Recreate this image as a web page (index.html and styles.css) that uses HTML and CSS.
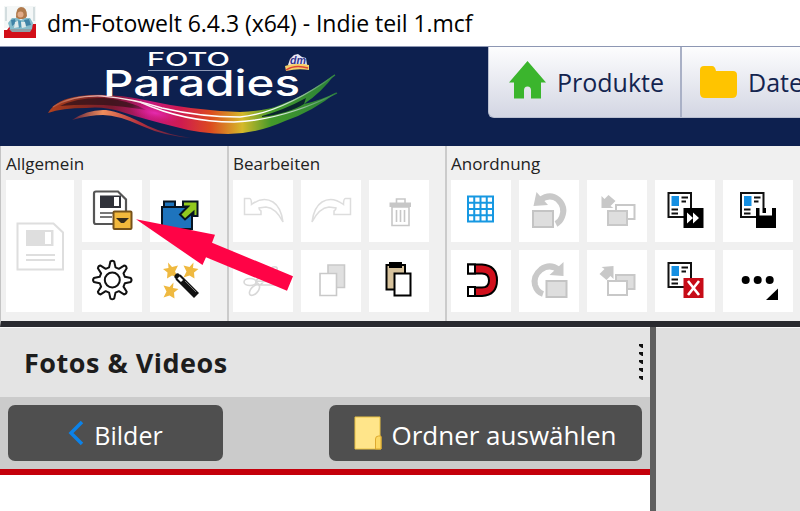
FILE: index.html
```html
<!DOCTYPE html>
<html lang="de">
<head>
    <meta charset="UTF-8">
    <meta name="viewport" content="width=device-width, initial-scale=1.0">
    <title>dm-Fotowelt</title>
    <link rel="stylesheet" href="styles.css">
</head>
<body>
    <div class="titlebar">
        <svg class="app-icon" width="34" height="34" viewBox="0 0 34 34">
            <rect x="1" y="1" width="32" height="22" fill="#f4f7f7"/>
            <path d="M3 2v14M31 2v14" stroke="#d3dddf" stroke-width="2"/>
            <path d="M13 12q0-10 5-10 6 0 6 9l-2 3h-8z" fill="#b07a4c"/>
            <circle cx="17.500" cy="9.500" r="3" fill="#e2ab88"/>
            <path d="M1 25h3l3-4h21l2-2h3v14H1z" fill="#d20f18"/>
            <path d="M5 18l4-5h5l4 2 4-2h5l3 5-1 6H7z" fill="#86bccb"/>
            <path d="M8 15l4-1 1 4-4 3zM21 15l5-1 2 6-5 1z" fill="#3f83a6"/>
            <path d="M12 17l3-1 1 6-5 1zM18 17l4 0 1 5-4 1z" fill="#dfeaeb"/>
            <path d="M15 15l3 1v6l-2 1z" fill="#4c94b4"/>
            <path d="M6 24h23l-2 3H9z" fill="#8e9fa5"/>
        </svg>
        <span class="window-title">dm-Fotowelt 6.4.3 (x64) - Indie teil 1.mcf</span>
    </div>

    <div class="header">
        <svg class="logo" width="360" height="100" viewBox="0 0 360 100">
            <defs>
                <linearGradient id="wave" x1="48" x2="338" y1="0" y2="0" gradientUnits="userSpaceOnUse">
                    <stop offset="0" stop-color="#b2421f"/>
                    <stop offset=".1" stop-color="#8b2d1e"/>
                    <stop offset=".22" stop-color="#7c1a30"/>
                    <stop offset=".35" stop-color="#c5187e"/>
                    <stop offset=".46" stop-color="#cf1b50"/>
                    <stop offset=".56" stop-color="#dc4a1f"/>
                    <stop offset=".67" stop-color="#d5b92a"/>
                    <stop offset=".77" stop-color="#449a2a"/>
                    <stop offset="1" stop-color="#28803a"/>
                </linearGradient>
                <linearGradient id="under" x1="72" x2="195" y1="0" y2="0" gradientUnits="userSpaceOnUse">
                    <stop offset="0" stop-color="#5c1f3c"/>
                    <stop offset=".25" stop-color="#ee8d5c"/>
                    <stop offset=".55" stop-color="#b5303d"/>
                    <stop offset="1" stop-color="#351b42"/>
                </linearGradient>
                <linearGradient id="shine" x1="60" x2="336" y1="0" y2="0" gradientUnits="userSpaceOnUse">
                    <stop offset="0" stop-color="#b75c43"/>
                    <stop offset=".18" stop-color="#f5d5d8"/>
                    <stop offset=".4" stop-color="#fff"/>
                    <stop offset=".75" stop-color="#fff"/>
                    <stop offset="1" stop-color="#2b803b"/>
                </linearGradient>
                <radialGradient id="glow">
                    <stop offset="0" stop-color="#e52bb0"/>
                    <stop offset="1" stop-color="#d81b83" stop-opacity="0"/>
                </radialGradient>
            </defs>
            <path d="M72 74Q88 63 106 64 122 66 148 80 168 89 192 92 164 90 142 80 118 69 103 69 90 69 72 74z" fill="url(#under)"/>
            <path d="M48 67Q56 53 80 50 108 46 150 55 190 64 240 66 262 65 275 61 309 49 335 28 322 46 304 58 322 54 337 46 312 66 285 75 256 88 228 88 200 88 172 80 144 73 122 66 104 60 86 62 62 62 48 67z" fill="url(#wave)"/>
            <path d="M60 60Q78 51 104 52 128 54 146 64 122 60 104 59 80 58 60 60z" fill="#35131a" opacity=".8"/>
            <ellipse cx="155" cy="67" rx="26" ry="8" fill="url(#glow)" transform="rotate(12 155 67)"/>
            <path d="M262 70Q284 64 306 52L304 58Q290 67 262 71z" fill="#0b252e"/>
            <path d="M53 61Q72 49 102 50 134 53 162 62 200 71 240 71 282 67 335 29" fill="none" stroke="url(#shine)" stroke-width="1.400"/>
            <path d="M140 56Q184 76 234 76 284 74 337 47" fill="none" stroke="url(#shine)" stroke-width="1.400"/>
            <text class="logo-foto" x="147" y="20" textLength="83" lengthAdjust="spacingAndGlyphs">FOTO</text>
            <path d="M148 24.500h82" stroke="#8e9ab7"/>
            <text class="logo-paradies" x="103" y="50" textLength="197" lengthAdjust="spacingAndGlyphs">Paradies</text>
            <path d="M288 19l2-6 4-4 4-1 4 3 4 1 1 7z" fill="#e9e7f4"/>
            <path d="M285 20q11-4 24-1v5q-11-2-23 1z" fill="#f6cf68"/>
            <path d="M286 24q9-6 22-2" fill="none" stroke="#dd4537" stroke-width="1.500"/>
            <text class="logo-dm" x="290" y="18" textLength="16" lengthAdjust="spacingAndGlyphs">dm</text>
        </svg>
        <div class="tabs">
            <div class="tab tab-products">
                <svg width="38" height="40" viewBox="0 0 38 40">
                    <path d="M18.500 1L37 22.500h-5V38.500H22v-8q0-4-3.500-4t-3.500 4v8H5v-16H0z" fill="#3bb52d"/>
                </svg>
                <span>Produkte</span>
            </div>
            <div class="tab tab-files">
                <svg width="37" height="32" viewBox="0 0 37 32">
                    <path d="M0 4q0-4 4-4h8q3 0 4 5h17q4 0 4 4v18q0 5-5 5H5q-5 0-5-5z" fill="#ffc400"/>
                </svg>
                <span>Datei</span>
            </div>
        </div>
    </div>

    <div class="toolbar">
        <div class="group group-general">
            <div class="group-title">Allgemein</div>
            <div class="tiles">
                <div class="tile tile-tall">
                    <svg width="68" height="132" viewBox="0 0 68 132" fill="none" stroke="#dedede" stroke-width="2">
                        <path d="M11.500 43.500h36l9.500 9v37H11.500z"/>
                        <path d="M20 50h27.500v16H20z" fill="#dedede" stroke="none"/>
                        <path d="M39 52h6v12h-6z" fill="#fff" stroke="none"/>
                        <path d="M20 75h29M20 80h29"/>
                    </svg>
                </div>
                <div class="tile">
                    <svg width="60" height="62" viewBox="0 0 60 62">
                        <path d="M14 11.500h22l8 8V44H14q-2 0-2-2V13.500q0-2 2-2z" fill="#fff" stroke="#555" stroke-width="2.200"/>
                        <path d="M18 15.500h21V28H18z" fill="#30323a"/>
                        <path d="M32 17h5v9h-5z" fill="#fff"/>
                        <path d="M18 33h14M18 37h12" stroke="#777" stroke-width="1.800"/>
                        <rect x="31.500" y="31.500" width="18" height="17.500" rx="1" fill="#f2b83c" stroke="#76521a" stroke-width="2"/>
                        <path d="M34 38h13l-5 5h-3z" fill="#33291b"/>
                    </svg>
                </div>
                <div class="tile">
                    <svg width="60" height="62" viewBox="0 0 60 62" stroke="#071421" stroke-width="2">
                        <path d="M14 21.500h11v5.500h17v22H12V27h2z" fill="#1e74bd"/>
                        <path d="M14 27h11" />
                        <path d="M33 21.500h14.500V36h-4v-4L35 39.500 30 34.500l8-8h-5z" fill="#91c91e"/>
                    </svg>
                </div>
                <div class="tile">
                    <svg width="60" height="62" viewBox="0 0 60 62" fill="none" stroke="#111" stroke-width="2" stroke-linejoin="round">
                        <path d="M27.100 17.400L28.400 11.500Q30.300 10 32.200 11.500L33.500 17.400 36.900 18.800 42 15.600Q44.400 15.900 44.700 18.300L41.500 23.400 42.900 26.800 48.800 28.100Q50.300 30 48.800 31.900L42.900 33.200 41.500 36.600 44.700 41.700Q44.400 44.100 42 44.400L36.900 41.200 33.500 42.600 32.200 48.500Q30.300 50 28.400 48.500L27.100 42.600 23.700 41.200 18.600 44.400Q16.200 44.100 15.900 41.700L19.100 36.600 17.700 33.200 11.800 31.900Q10.300 30 11.800 28.100L17.700 26.800 19.100 23.400 15.900 18.300Q16.200 15.900 18.600 15.600L23.700 18.800z"/>
                        <circle cx="30.300" cy="30" r="7.500"/>
                    </svg>
                </div>
                <div class="tile">
                    <svg width="60" height="62" viewBox="0 0 60 62">
                        <defs>
                            <path id="star" d="M-3-8L1-3.500 7-5 4 1 7 7 1 5-4 8-3.500 2-8-1.500-2.500-2.500z" fill="#efb940"/>
                        </defs>
                        <use href="#star" x="21" y="20.500"/>
                        <use href="#star" transform="translate(40.500 20.500) scale(-1 1)"/>
                        <use href="#star" transform="translate(20.500 40.500) scale(-1 1)"/>
                        <path d="M28 27l18.500 18.500" stroke="#111" stroke-width="7"/>
                        <path d="M27.500 26.500l4.500 4.500" stroke="#111" stroke-width="6" stroke-linecap="round"/>
                        <path d="M28.500 27.500l3.500 3.500" stroke="#fff" stroke-width="3"/>
                        <path d="M35 31l11 11" stroke="#777"/>
                    </svg>
                </div>
            </div>
        </div>

        <div class="group group-edit">
            <div class="group-title">Bearbeiten</div>
            <div class="tiles">
                <div class="tile">
                    <svg width="60" height="62" viewBox="0 0 60 62" fill="none" stroke="#ddd" stroke-width="1.500">
                        <path id="undo" d="M11.500 18.500h5q2 0 2 6Q30 16 40 22q8 5 10 20-7-14-17-15l-7 1q0 2 2 3v3.500H11.500z"/>
                    </svg>
                </div>
                <div class="tile">
                    <svg width="60" height="62" viewBox="0 0 60 62" fill="none" stroke="#ddd" stroke-width="1.500">
                        <use href="#undo" transform="translate(61 0) scale(-1 1)"/>
                    </svg>
                </div>
                <div class="tile">
                    <svg width="60" height="62" viewBox="0 0 60 62" fill="none" stroke="#c7c7c7" stroke-width="1.600">
                        <path d="M27.500 23v-4h8.500v4"/>
                        <path d="M20.500 22.500H42V27H20.500z" fill="#c7c7c7" stroke="none"/>
                        <path d="M23 27h17v18.500H23zM27.500 30v12M31.500 30v12M35.500 30v12"/>
                    </svg>
                </div>
                <div class="tile">
                    <svg width="60" height="62" viewBox="0 0 60 62" fill="#fff" stroke="#d8d8d8" stroke-width="1.600">
                        <path d="M22 31l18-14q5-1 4 3L27 35zM23 31l24 1q4 2-2 3l-22 0z"/>
                        <ellipse cx="17" cy="32" rx="6" ry="3.500"/>
                        <ellipse cx="21.500" cy="40" rx="6.500" ry="3.500" transform="rotate(-48 21.500 40)"/>
                    </svg>
                </div>
                <div class="tile">
                    <svg width="60" height="62" viewBox="0 0 60 62" fill="#fff" stroke="#c9c9c9" stroke-width="1.600">
                        <path d="M27 15h16.500v22.500H27z" fill="#e0e0e0"/>
                        <path d="M19 23.500h16.500v22H19z"/>
                    </svg>
                </div>
                <div class="tile">
                    <svg width="60" height="62" viewBox="0 0 60 62" fill="#fff" stroke="#000" stroke-width="2">
                        <path d="M17.500 15H36v24.500H17.500z" fill="#d7c29c"/>
                        <path d="M21 13h11v4H21z" fill="#000"/>
                        <path d="M25.500 23.500h16v22h-16z"/>
                    </svg>
                </div>
            </div>
        </div>

        <div class="group group-arrange">
            <div class="group-title">Anordnung</div>
            <div class="tiles">
                <div class="tile">
                    <svg width="60" height="62" viewBox="0 0 60 62" fill="none" stroke="#1698e2" stroke-width="2">
                        <path d="M17 16.500h25v25H17zM23.250 16v26M29.500 16v26M35.750 16v26M17 22.750h25M17 29h25M17 35.250h25"/>
                    </svg>
                </div>
                <div class="tile">
                    <svg width="60" height="62" viewBox="0 0 60 62">
                        <path d="M21 20Q31 13 39 19.500 47 27 43 37q-2 5-6 7" fill="none" stroke="#c9c9c9" stroke-width="6"/>
                        <path d="M17.500 12l11.500 13-14.500 1z" fill="#c9c9c9"/>
                        <path d="M14 31h20v16H14z" fill="#dedede" stroke="#c4c4c4" stroke-width="2"/>
                    </svg>
                </div>
                <div class="tile">
                    <svg width="60" height="62" viewBox="0 0 60 62" stroke="#c8c8c8" stroke-width="2">
                        <path d="M14.500 28V16l3 3 4-4 7 6-5 5 3 2z" fill="#c8c8c8" stroke="none"/>
                        <path d="M29 25h18.500v14H29z" fill="#fff"/>
                        <path d="M21 31h19v14H21z" fill="#dedede"/>
                    </svg>
                </div>
                <div class="tile">
                    <svg width="60" height="62" viewBox="0 0 60 62">
                        <g id="page">
                            <path d="M13.500 13H36v24H13.500z" fill="#fff" stroke="#111" stroke-width="2"/>
                            <path d="M16.500 16H24v10h-7.500z" fill="#158fe2"/>
                            <path d="M26.500 17.500H33M26.500 21.500h4.500M16.500 29.500h6.500M16.500 33.500h6.500" stroke="#111" stroke-width="1.800"/>
                        </g>
                        <path d="M28.500 28h20v20h-20z" fill="#000"/>
                        <path d="M32 32.500l6 5.500-6 5.500zM38 32.500l6 5.500-6 5.500z" fill="#fff"/>
                    </svg>
                </div>
                <div class="tile tile-wide">
                    <svg width="70" height="62" viewBox="0 0 70 62">
                        <use href="#page" x="4.500"/>
                        <path d="M33 28h20v20H33z" fill="#000"/>
                        <path d="M36.500 28h3v5h3.500v-5h6v7.500H36.500z" fill="#fff"/>
                    </svg>
                </div>
                <div class="tile">
                    <svg width="60" height="62" viewBox="0 0 60 62">
                        <path d="M17 14.500h14q15 1 15 15.800T31 46H17v-8.500h14q7 0 7-7t-7-7H17z" fill="#d1101d" stroke="#000" stroke-width="2"/>
                        <path d="M17 14.500h7v9h-7zM17 37h7v9h-7z" fill="#fff" stroke="#000" stroke-width="2"/>
                    </svg>
                </div>
                <div class="tile">
                    <svg width="60" height="62" viewBox="0 0 60 62">
                        <path d="M40 20Q31 13 22 19.500 14 26 16 35q2 7 8 9" fill="none" stroke="#c9c9c9" stroke-width="6"/>
                        <path d="M44.500 12v14l-14-1z" fill="#c9c9c9"/>
                        <path d="M27.500 31h20v16h-20z" fill="#dedede" stroke="#c4c4c4" stroke-width="2"/>
                    </svg>
                </div>
                <div class="tile">
                    <svg width="60" height="62" viewBox="0 0 60 62" stroke="#c8c8c8" stroke-width="2">
                        <path d="M26.500 16v13l-3-3-4 4-7-6 5-5-3-2z" fill="#c8c8c8" stroke="none"/>
                        <path d="M29 25h18.500v14H29z" fill="#dedede"/>
                        <path d="M21 31h19v14H21z" fill="#fff"/>
                    </svg>
                </div>
                <div class="tile">
                    <svg width="60" height="62" viewBox="0 0 60 62">
                        <use href="#page"/>
                        <path d="M28.500 28h20v20h-20z" fill="#c70c18"/>
                        <path d="M33 31l11 14M44 31L33 45" stroke="#fff" stroke-width="2.600"/>
                    </svg>
                </div>
                <div class="tile tile-wide">
                    <svg width="70" height="62" viewBox="0 0 70 62">
                        <circle cx="22.700" cy="30" r="4"/>
                        <circle cx="34.700" cy="30" r="4"/>
                        <circle cx="46.700" cy="30" r="4"/>
                        <path d="M43 50h12V38.500z"/>
                    </svg>
                </div>
            </div>
        </div>
    </div>

    <div class="workspace">
        <div class="sidebar">
            <div class="panel-header">
                <span>Fotos &amp; Videos</span>
                <svg class="grip" width="5" height="38" viewBox="0 0 5 38">
                    <path d="M0 0h4v4H3L0 2zM0 8h4v4H3L0 10zM0 16h4v4H3L0 18zM0 24h4v4H3L0 26zM0 32h4v4H3L0 34z" fill="#111"/>
                </svg>
            </div>
            <div class="panel-actions">
                <button class="btn btn-images">
                    <svg width="16" height="26" viewBox="0 0 16 26">
                        <path d="M14 2L3 13l11 11" fill="none" stroke="#0c82e8" stroke-width="3.500"/>
                    </svg>
                    <span>Bilder</span>
                </button>
                <button class="btn btn-folder">
                    <svg width="28" height="34" viewBox="0 0 28 34">
                        <path d="M1 1h25v19l1 1v12H1z" fill="#ffe58a" stroke="#e9c244"/>
                        <path d="M21.500 33V23q0-3 3-3h2.500v13z" fill="#fcd964" stroke="#dda92f"/>
                    </svg>
                    <span>Ordner auswählen</span>
                </button>
            </div>
            <div class="photo-list"></div>
        </div>
        <div class="canvas"></div>
    </div>

    <svg class="pointer" width="160" height="74" viewBox="0 0 160 74">
        <path d="M1 1.300l79 15.400-3 8 81 33.600-6 14.400L71 39.300 67.500 47z" fill="#ff0346"/>
    </svg>
</body>
</html>
```
FILE: styles.css
```css
* {
    margin: 0;
    padding: 0;
    box-sizing: border-box;
}

body {
    width: 800px;
    height: 511px;
    overflow: hidden;
    display: flex;
    flex-direction: column;
    position: relative;
    font-family: 'Open Sans', 'Noto Sans', sans-serif;
    background: #fff;
    color: #1d1d1d;
}

svg {
    display: block;
    flex-shrink: 0;
}

.titlebar {
    height: 46px;
    display: flex;
    align-items: center;
    gap: 10px;
    padding-left: 3px;
    flex-shrink: 0;
}

.app-icon {
    margin-bottom: 2px;
}

.window-title {
    font-size: 23px;
    letter-spacing: -0.04px;
    white-space: nowrap;
    color: #000;
}

.header {
    height: 100px;
    flex-shrink: 0;
    background: #0d204f;
    border-top: 1px solid #8d97b3;
    display: flex;
    justify-content: space-between;
    align-items: flex-start;
}

.logo {
    margin-top: -1px;
}

.logo-foto {
    font: 500 19px 'Inter', sans-serif;
    fill: #fff;
}

.logo-paradies {
    font: 500 36px 'Inter', sans-serif;
    fill: #fff;
}

.logo-dm {
    font: italic bold 10px 'Liberation Sans', sans-serif;
    fill: #34378f;
}

.tabs {
    width: 312px;
    height: 71px;
    display: flex;
    overflow: hidden;
    border-left: 1px solid #b9bfd0;
    border-bottom: 1px solid #b9bfd0;
    border-bottom-left-radius: 6px;
    background: linear-gradient(#fdfdfe, #d3d6e3);
}

.tab {
    display: flex;
    align-items: center;
    font-size: 25px;
    color: #14244f;
    white-space: nowrap;
    flex-shrink: 0;
}

.tab-products {
    width: 193px;
    padding-left: 20px;
    gap: 10px;
    border-right: 2px solid #a9b0c6;
}

.tab-products svg {
    margin-top: -4px;
}

.tab-files {
    padding-left: 18px;
    gap: 11px;
}

.toolbar {
    height: 181px;
    flex-shrink: 0;
    display: flex;
    background: #f0f0f0;
    border-left: 1px solid #c4c4c4;
    border-bottom: 6px solid #292a2f;
}

.group {
    padding: 5px 0 0 5px;
    border-right: 2px solid #cbcbcb;
    flex-shrink: 0;
}

.group-general {
    width: 228px;
}

.group-edit {
    width: 218px;
    padding-left: 4px;
}

.group-arrange {
    padding-left: 4px;
    border-right: none;
}

.group-title {
    height: 29px;
    line-height: 25px;
    font-size: 17px;
    white-space: nowrap;
    color: #222;
}

.tiles {
    display: grid;
    grid-template-rows: 62px 62px;
    grid-template-columns: 60px 60px 60px;
    gap: 8px;
}

.group-general .tiles {
    grid-template-columns: 68px 60px 60px;
}

.group-arrange .tiles {
    grid-template-columns: 60px 60px 60px 60px 70px;
}

.tile {
    background: #fff;
}

.tile-tall {
    grid-row: span 2;
}

.workspace {
    flex: 1;
    display: flex;
    min-height: 0;
}

.sidebar {
    width: 656px;
    display: flex;
    flex-direction: column;
    border-right: 6px solid #5f5f5f;
}

.panel-header {
    height: 70px;
    flex-shrink: 0;
    display: flex;
    align-items: center;
    justify-content: space-between;
    padding: 0 6px 0 24px;
    border-top: 1px solid #f8f8f8;
    background: #e4e4e4;
    font-size: 27px;
    letter-spacing: 0.5px;
    font-weight: bold;
}

.panel-actions {
    height: 72px;
    flex-shrink: 0;
    display: flex;
    justify-content: space-between;
    align-items: center;
    padding: 0 8px;
    background: #cbcbcb;
}

.btn {
    height: 56px;
    display: flex;
    align-items: center;
    justify-content: center;
    border: none;
    border-radius: 7px;
    background: #4f4f4f;
    color: #fff;
    font-family: inherit;
    font-size: 26px;
    white-space: nowrap;
}

.btn span {
    padding-top: 4px;
}

.btn-images {
    width: 215px;
    gap: 10px;
    font-size: 25px;
}

.btn-folder {
    width: 313px;
    gap: 9px;
}

.photo-list {
    flex: 1;
    background: #fff;
    border-top: 6px solid #c4000b;
}

.canvas {
    flex: 1;
    border-top: 1px solid #f8f8f8;
    background: #dfdfdf;
}

/* callout arrow lies over the toolbar */
.pointer {
    position: absolute;
    left: 135px;
    top: 218px;
}
```
